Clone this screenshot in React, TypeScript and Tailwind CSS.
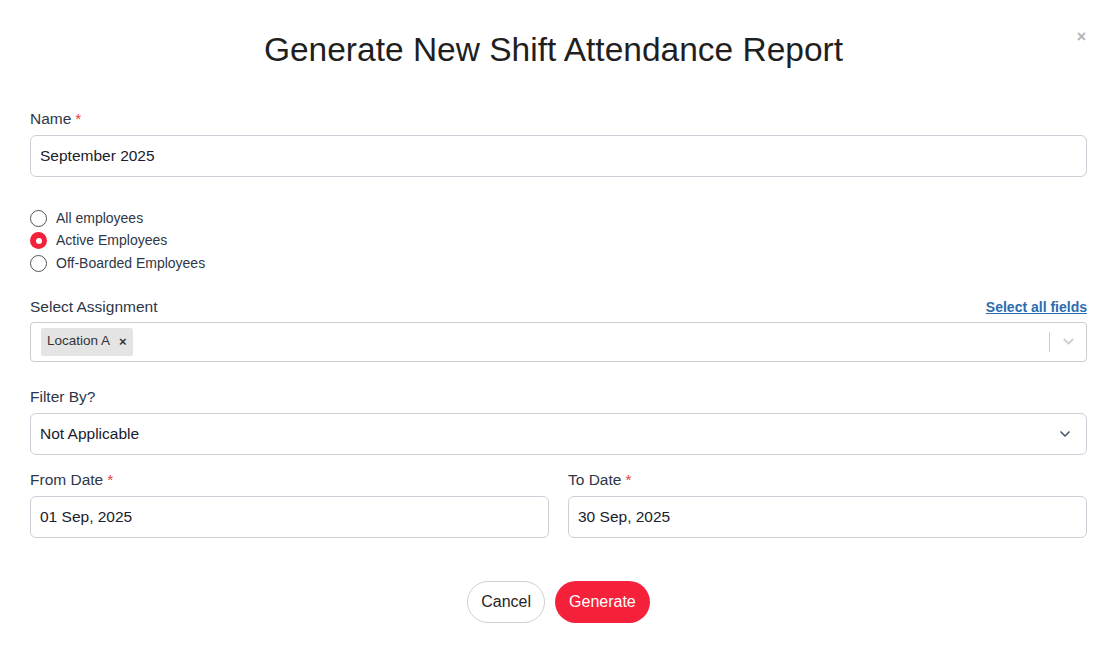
import { ChevronDown } from 'lucide-react';

const radios = [
  { label: 'All employees', checked: false },
  { label: 'Active Employees', checked: true },
  { label: 'Off-Boarded Employees', checked: false },
];

function Label({ text, required }: { text: string; required?: boolean }) {
  return (
    <div className="text-[15.5px] leading-[22px] text-[#2d3748]">
      {text}
      {required && <span className="ml-1 text-[#e53e3e]">*</span>}
    </div>
  );
}

function TextBox({ value }: { value: string }) {
  return (
    <div className="h-[42px] rounded-md border border-[#cbd0d8] bg-white px-[9px] flex items-center text-[15.5px] text-[#1a202c]">
      {value}
    </div>
  );
}

export default function App() {
  return (
    <div className="relative min-h-[659px] w-full bg-white font-['Liberation_Sans',Arial,sans-serif]">
      <button className="absolute right-[31px] top-[29px] text-[#b5b5b5] text-[16px] leading-none font-bold">
        ×
      </button>

      <div className="px-[30px] pt-[29px]">
        <h1 className="pr-[10px] text-center text-[33.5px] leading-[42px] text-[#1f1f1f]">
          Generate New Shift Attendance Report
        </h1>

        {/* Name */}
        <div className="mt-[37px]">
          <Label text="Name" required />
          <div className="mt-[5px]">
            <TextBox value="September 2025" />
          </div>
        </div>

        {/* Employee type */}
        <div className="mt-[30px] flex flex-col">
          {radios.map((r) => (
            <label key={r.label} className="flex items-center h-[22.5px] gap-[9px]">
              {r.checked ? (
                <span className="w-[17px] h-[17px] rounded-full bg-[#f5213a] flex items-center justify-center">
                  <span className="w-[6px] h-[6px] rounded-full bg-white" />
                </span>
              ) : (
                <span className="w-[17px] h-[17px] rounded-full border border-[#555] bg-white" />
              )}
              <span className="text-[14px] text-[#2d3748]">{r.label}</span>
            </label>
          ))}
        </div>

        {/* Assignment */}
        <div className="mt-[21px]">
          <div className="flex items-end justify-between">
            <Label text="Select Assignment" />
            <a className="text-[14px] font-bold text-[#2b6cb0] underline leading-[22px]">Select all fields</a>
          </div>
          <div className="mt-[4px] h-[40px] rounded-[4px] border border-[#cccccc] bg-white flex items-center pl-[10px]">
            <div className="flex-1">
              <span className="inline-flex items-center h-[28px] bg-[#e4e4e4] rounded-[2px] pl-[6px] pr-[6px] text-[13.5px] text-[#333]">
                Location A
                <span className="ml-[9px] text-[13px] font-bold">×</span>
              </span>
            </div>
            <div className="w-px h-[20px] bg-[#cccccc]" />
            <div className="w-[36px] flex justify-center">
              <ChevronDown className="w-[17px] h-[17px] text-[#cccccc]" strokeWidth={2.5} />
            </div>
          </div>
        </div>

        {/* Filter */}
        <div className="mt-[24px]">
          <Label text="Filter By?" />
          <div className="mt-[5px] h-[42px] rounded-md border border-[#cbd0d8] bg-white px-[9px] flex items-center justify-between text-[15.5px] text-[#1a202c]">
            Not Applicable
            <ChevronDown className="w-[16px] h-[16px] mr-[4px] text-[#4a5568]" strokeWidth={2.5} />
          </div>
        </div>

        {/* Dates */}
        <div className="mt-[14px] grid grid-cols-2 gap-x-[19px]">
          <div>
            <Label text="From Date" required />
            <div className="mt-[5px]">
              <TextBox value="01 Sep, 2025" />
            </div>
          </div>
          <div>
            <Label text="To Date" required />
            <div className="mt-[5px]">
              <TextBox value="30 Sep, 2025" />
            </div>
          </div>
        </div>

        {/* Actions */}
        <div className="mt-[43px] flex justify-center gap-[10px]">
          <button className="h-[42px] px-[13px] rounded-full border border-[#d0d0d0] bg-white text-[16px] text-[#1f1f1f]">
            Cancel
          </button>
          <button className="h-[42px] px-[14px] rounded-full bg-[#f5213a] text-[16px] text-white">
            Generate
          </button>
        </div>
      </div>
    </div>
  );
}
